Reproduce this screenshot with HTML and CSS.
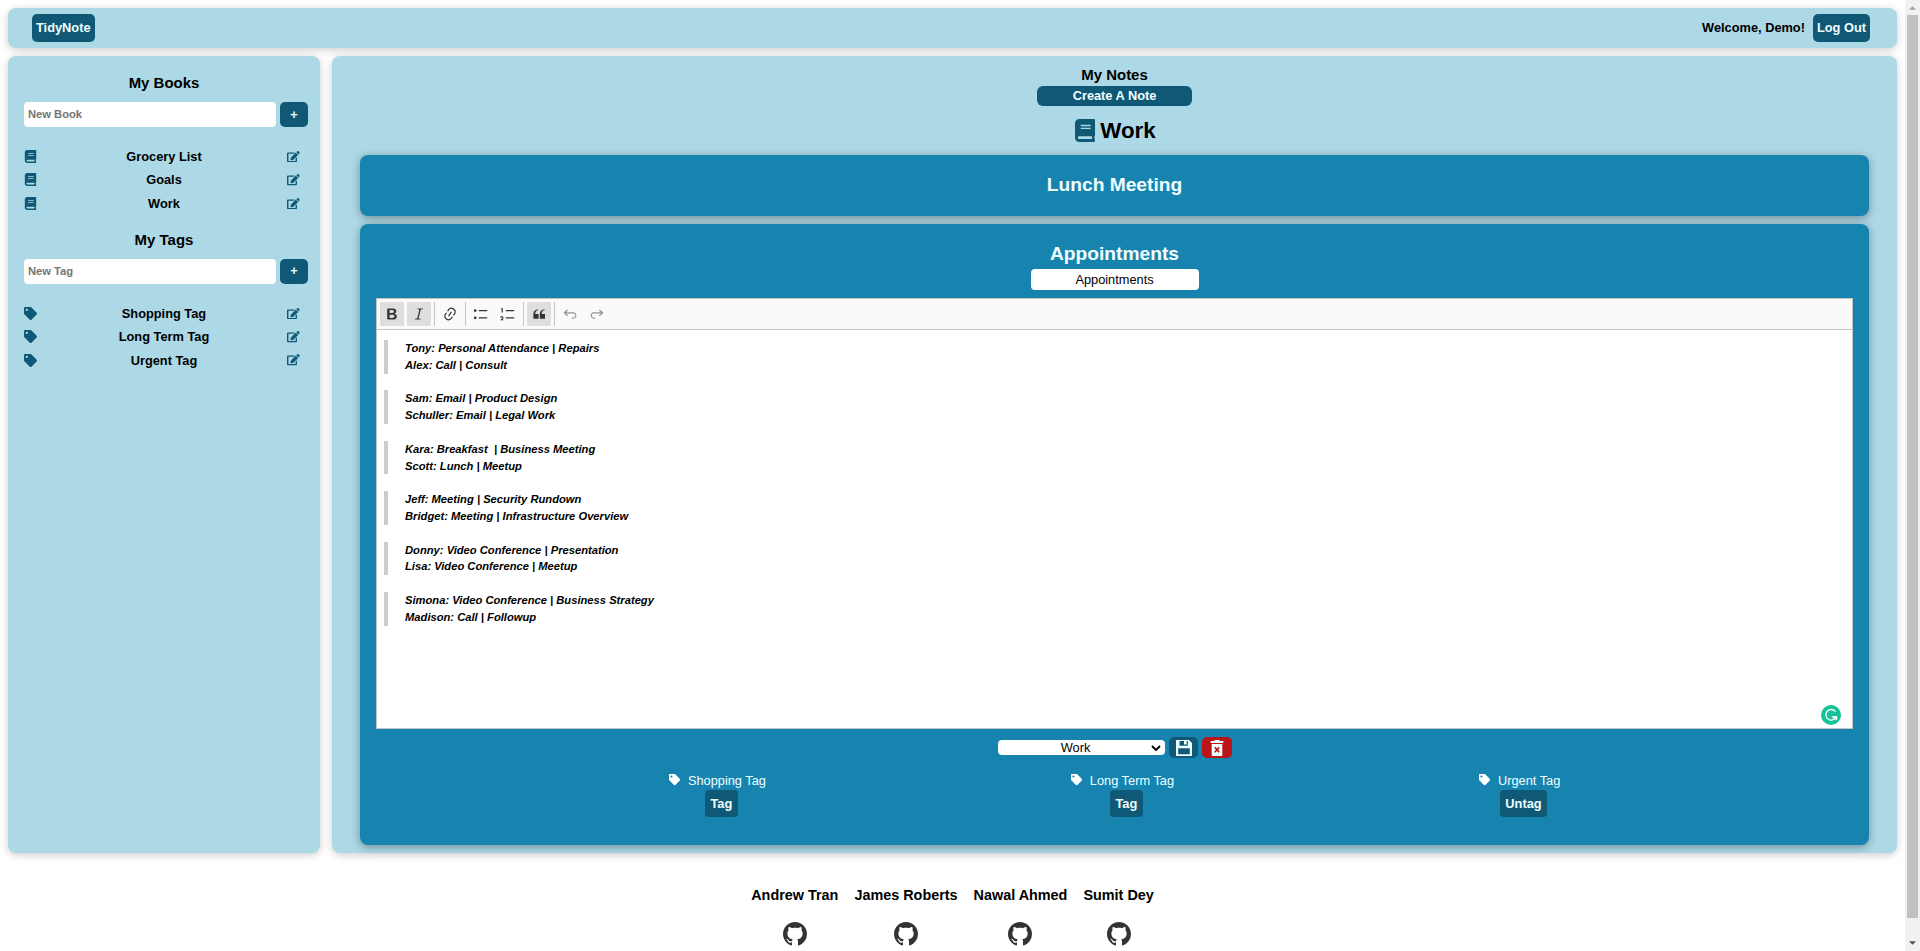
FILE: index.html
```html
<!DOCTYPE html>
<html lang="en">
<head>
<meta charset="utf-8">
<title>TidyNote</title>
<link rel="stylesheet" href="styles.css">
</head>
<body>
<svg class="defs" width="0" height="0" aria-hidden="true">
  <symbol id="book" viewBox="0 0 448 512"><path d="M448 360V24c0-13.300-10.700-24-24-24H96C43 0 0 43 0 96v320c0 53 43 96 96 96h328c13.300 0 24-10.700 24-24v-16c0-7.500-3.500-14.300-8.900-18.700-4.200-15.400-4.200-59.300 0-74.700 5.400-4.300 8.900-11.100 8.900-18.600zM128 134c0-3.300 2.700-6 6-6h212c3.300 0 6 2.700 6 6v20c0 3.300-2.700 6-6 6H134c-3.300 0-6-2.700-6-6v-20zm0 64c0-3.300 2.700-6 6-6h212c3.300 0 6 2.700 6 6v20c0 3.300-2.700 6-6 6H134c-3.300 0-6-2.700-6-6v-20zm253.400 250H96c-17.700 0-32-14.300-32-32 0-17.600 14.400-32 32-32h285.400c-1.900 17.100-1.900 46.900 0 64z"/></symbol>
  <symbol id="tag" viewBox="0 0 512 512"><path d="M0 252.118V48C0 21.490 21.490 0 48 0h204.118a48 48 0 0 1 33.941 14.059l211.882 211.882c18.745 18.745 18.745 49.137 0 67.882L293.823 497.941c-18.745 18.745-49.137 18.745-67.882 0L14.059 286.059A48 48 0 0 1 0 252.118zM112 64c-26.510 0-48 21.490-48 48s21.490 48 48 48 48-21.490 48-48-21.490-48-48-48z"/></symbol>
  <symbol id="edit" viewBox="0 0 576 512"><path d="M402.600 83.200l90.200 90.200c3.800 3.800 3.800 10 0 13.800L274.400 405.600l-92.800 10.300c-12.400 1.400-22.900-9.100-21.500-21.500l10.300-92.800L388.800 83.200c3.800-3.800 10-3.800 13.800 0zm162-22.900l-48.800-48.800c-15.200-15.200-39.900-15.200-55.200 0l-35.400 35.400c-3.800 3.800-3.800 10 0 13.800l90.200 90.200c3.800 3.800 10 3.800 13.800 0l35.400-35.400c15.200-15.300 15.200-40 0-55.200zM384 346.200V448H64V128h229.800c3.200 0 6.200-1.300 8.500-3.500l40-40c7.600-7.600 2.200-20.500-8.500-20.500H48C21.500 64 0 85.500 0 112v352c0 26.500 21.500 48 48 48h352c26.500 0 48-21.500 48-48V306.200c0-10.700-12.900-16-20.500-8.500l-40 40c-2.200 2.300-3.500 5.300-3.500 8.500z"/></symbol>
  <symbol id="github" viewBox="0 0 16 16"><path d="M8 0C3.580 0 0 3.580 0 8c0 3.540 2.290 6.530 5.470 7.590.4.070.55-.17.55-.38 0-.19-.01-.82-.01-1.490-2.010.37-2.530-.49-2.690-.94-.09-.23-.48-.94-.82-1.130-.28-.15-.68-.52-.01-.53.63-.01 1.080.58 1.230.82.720 1.210 1.870.87 2.330.66.070-.52.280-.87.510-1.070-1.780-.2-3.640-.89-3.640-3.950 0-.87.310-1.590.82-2.150-.08-.2-.36-1.020.08-2.120 0 0 .67-.21 2.200.82.640-.18 1.320-.27 2-.27s1.360.09 2 .27c1.530-1.040 2.200-.82 2.200-.82.440 1.100.160 1.920.080 2.120.510.560.820 1.270.820 2.150 0 3.070-1.870 3.750-3.650 3.950.290.250.540.730.540 1.480 0 1.070-.01 1.930-.01 2.200 0 .21.150.46.550.38A8.010 8.010 0 0 0 16 8c0-4.420-3.580-8-8-8z"/></symbol>
</svg>
<div class="window">
  <div class="page">
    <header class="navbar">
      <button class="btn">TidyNote</button>
      <div class="session"><span>Welcome, Demo!</span><button class="btn">Log Out</button></div>
    </header>
    <div class="columns">
      <aside class="sidebar">
        <h3>My Books</h3>
        <form class="adder"><input type="text" placeholder="New Book"><button type="button" class="plus">+</button></form>
        <ul>
          <li><svg class="mark"><use href="#book"/></svg><span>Grocery List</span><svg class="pen"><use href="#edit"/></svg></li>
          <li><svg class="mark"><use href="#book"/></svg><span>Goals</span><svg class="pen"><use href="#edit"/></svg></li>
          <li><svg class="mark"><use href="#book"/></svg><span>Work</span><svg class="pen"><use href="#edit"/></svg></li>
        </ul>
        <h3>My Tags</h3>
        <form class="adder"><input type="text" placeholder="New Tag"><button type="button" class="plus">+</button></form>
        <ul>
          <li><svg class="mark"><use href="#tag"/></svg><span>Shopping Tag</span><svg class="pen"><use href="#edit"/></svg></li>
          <li><svg class="mark"><use href="#tag"/></svg><span>Long Term Tag</span><svg class="pen"><use href="#edit"/></svg></li>
          <li><svg class="mark"><use href="#tag"/></svg><span>Urgent Tag</span><svg class="pen"><use href="#edit"/></svg></li>
        </ul>
      </aside>
      <main class="notes">
        <h3>My Notes</h3>
        <button class="create">Create A Note</button>
        <h1><svg><use href="#book"/></svg>Work</h1>
        <section class="note closed"><h2>Lunch Meeting</h2></section>
        <section class="note open">
          <h2>Appointments</h2>
          <input class="title" type="text" value="Appointments">
          <div class="editor">
            <div class="toolbar">
              <button class="tool on"><svg viewBox="0 0 20 20"><path d="M10.187 17H5.773c-.637 0-1.092-.138-1.364-.415-.273-.277-.409-.718-.409-1.323V4.738c0-.617.140-1.062.419-1.332.279-.27.730-.406 1.354-.406h4.680c.690 0 1.288.041 1.793.124.506.083.960.242 1.360.478.341.197.644.447.906.750a3.262 3.262 0 0 1 .808 2.162c0 1.401-.722 2.426-2.167 3.075C15.050 10.175 16 11.315 16 13.010a3.756 3.756 0 0 1-2.296 3.504 6.100 6.100 0 0 1-1.517.377c-.571.073-1.238.110-2 .110zm-.217-6.217H7v4.087h3.069c1.977 0 2.965-.69 2.965-2.072 0-.707-.256-1.220-.768-1.537-.512-.319-1.277-.478-2.296-.478zM7 5.130v3.619h2.606c.729 0 1.292-.067 1.690-.2a1.600 1.600 0 0 0 .91-.765c.165-.267.247-.566.247-.897 0-.707-.26-1.176-.778-1.409-.519-.232-1.310-.348-2.375-.348H7z"/></svg></button>
              <button class="tool on"><svg viewBox="0 0 20 20"><path d="M9.586 14.633l.021.004c-.036.335.095.655.393.962.082.083.173.150.274.201h1.474a.6.6 0 1 1 0 1.200H5.304a.6.6 0 0 1 0-1.200h1.150c.474-.07.809-.182 1.005-.334.157-.122.291-.32.404-.597l2.416-9.550a1.053 1.053 0 0 0-.281-.823 1.120 1.120 0 0 0-.442-.296H8.150a.6.6 0 0 1 0-1.200h6.443a.6.6 0 1 1 0 1.200h-1.195c-.376.056-.65.155-.823.296-.215.175-.423.439-.623.790l-2.366 9.347z"/></svg></button>
              <i class="bar"></i>
              <button class="tool"><svg viewBox="0 0 20 20"><path d="m11.077 15 .991-1.416a.75.75 0 1 1 1.229.860l-1.148 1.640a.748.748 0 0 1-.217.206 5.251 5.251 0 0 1-8.503-5.955.741.741 0 0 1 .120-.274l1.147-1.639a.75.75 0 1 1 1.228.860L4.933 10.700l.006.003a3.750 3.750 0 0 0 6.132 4.294l.006.004zm5.494-5.335a.748.748 0 0 1-.120.274l-1.147 1.639a.75.75 0 1 1-1.228-.860l.860-1.230a3.750 3.750 0 0 0-6.144-4.301l-.860 1.229a.75.75 0 0 1-1.229-.860l1.148-1.640a.748.748 0 0 1 .217-.206 5.251 5.251 0 0 1 8.503 5.955zm-4.563-2.532a.75.75 0 0 1 .184 1.045l-3.155 4.505a.75.75 0 1 1-1.229-.860l3.155-4.506a.75.75 0 0 1 1.045-.184z"/></svg></button>
              <i class="bar"></i>
              <button class="tool"><svg viewBox="0 0 20 20"><path d="M7 5.750c0 .414.336.750.750.750h9.500a.75.75 0 1 0 0-1.500h-9.500a.75.75 0 0 0-.750.750zm-6 0C1 4.784 1.777 4 2.750 4c.966 0 1.750.777 1.750 1.750 0 .966-.777 1.750-1.750 1.750C1.784 7.500 1 6.723 1 5.750zm6 9c0 .414.336.750.750.750h9.500a.75.75 0 1 0 0-1.500h-9.500a.75.75 0 0 0-.750.750zm-6 0c0-.966.777-1.750 1.750-1.750.966 0 1.750.777 1.750 1.750 0 .966-.777 1.750-1.750 1.750-.966 0-1.750-.777-1.750-1.750z"/></svg></button>
              <button class="tool"><svg viewBox="0 0 20 20"><path d="M7 5.750c0 .414.336.750.750.750h9.500a.75.75 0 1 0 0-1.500h-9.500a.75.75 0 0 0-.750.750zM3.500 3v5H2V3.700H1v-1h2.500V3zM.343 17.857l2.590-3.257H2.920a.6.6 0 1 0-1.040 0H.302a2 2 0 1 1 3.995 0h-.001c-.048.405-.16.734-.333.988-.175.254-.590.692-1.244 1.312H4.300v1h-4l.043-.043zM7 14.750a.75.75 0 0 1 .750-.750h9.500a.75.75 0 1 1 0 1.500h-9.500a.75.75 0 0 1-.750-.750z"/></svg></button>
              <i class="bar"></i>
              <button class="tool on"><svg viewBox="0 0 20 20"><path d="M3 10.423a6.500 6.500 0 0 1 6.056-6.408l.038.670C6.448 5.423 5.354 7.663 5.220 10H9c.552 0 .500.432.500.986v4.511c0 .554-.448.503-1 .503h-5c-.552 0-.500-.449-.500-1.003v-4.574zm8 0a6.500 6.500 0 0 1 6.056-6.408l.038.670c-2.646.739-3.740 2.979-3.873 5.315H17c.552 0 .500.432.500.986v4.511c0 .554-.448.503-1 .503h-5c-.552 0-.500-.449-.500-1.003v-4.574z"/></svg></button>
              <i class="bar"></i>
              <button class="tool off"><svg viewBox="0 0 20 20"><path d="M5.042 9.367l2.189 1.837a.75.75 0 0 1-.965 1.149l-3.788-3.180a.747.747 0 0 1-.210-.284.75.75 0 0 1 .170-.945L6.230 4.762a.75.75 0 1 1 .964 1.150L4.863 7.866h8.917A.75.75 0 0 1 14 7.900a4 4 0 1 1-1.477 7.718l.344-1.489a2.500 2.500 0 1 0 1.094-4.730l.008-.032H5.042z"/></svg></button>
              <button class="tool off"><svg viewBox="0 0 20 20"><path d="M14.958 9.367l-2.189 1.837a.75.75 0 0 0 .965 1.149l3.788-3.180a.747.747 0 0 0 .210-.284.75.75 0 0 0-.170-.945L13.770 4.762a.75.75 0 1 0-.964 1.150l2.331 1.955H6.220A.75.75 0 0 0 6 7.900a4 4 0 1 0 1.477 7.718l-.344-1.489A2.500 2.500 0 1 1 6.039 9.400l-.008-.032h8.927z"/></svg></button>
            </div>
            <div class="content">
              <blockquote>Tony: Personal Attendance | Repairs<br>Alex: Call | Consult</blockquote>
              <blockquote>Sam: Email | Product Design<br>Schuller: Email | Legal Work</blockquote>
              <blockquote>Kara: Breakfast&nbsp; | Business Meeting<br>Scott: Lunch | Meetup</blockquote>
              <blockquote>Jeff: Meeting | Security Rundown<br>Bridget: Meeting | Infrastructure Overview</blockquote>
              <blockquote>Donny: Video Conference | Presentation<br>Lisa: Video Conference | Meetup</blockquote>
              <blockquote>Simona: Video Conference | Business Strategy<br>Madison: Call | Followup</blockquote>
              <svg class="checker" viewBox="0 0 20 20"><circle cx="10" cy="10" r="10" fill="#15c39a"/><path d="M14.500 6.700A5.300 5.300 0 1 0 15 12H10.900" fill="none" stroke="#fff" stroke-width="1.300"/><path d="M12.300 11.200H16.200V15.400L14.900 14.200L13.600 15z" fill="#fff"/></svg>
            </div>
          </div>
          <div class="actions">
            <div class="select"><span>Work</span><svg viewBox="0 0 10 6"><path d="M1 1l4 4 4-4" fill="none" stroke="#000" stroke-width="1.900"/></svg></div>
            <button class="icon save"><svg viewBox="0 0 16 16"><path fill-rule="evenodd" d="M.5 0H13L16 3V15.500a.5.500 0 0 1-.5.500H.5a.5.500 0 0 1-.5-.5V.5A.5.500 0 0 1 .5 0zM3.500 1v4.800H11.800V1H10.600V4.600H8V1zM2.200 8.300v6h11.600v-6z"/></svg></button>
            <button class="icon trash"><svg viewBox="0 0 14 16"><path fill-rule="evenodd" d="M4.500 1V0h5v1H13.300V3H.7V1zM1.700 4H12.300V15a1 1 0 0 1-1 1H2.700a1 1 0 0 1-1-1zM4.200 7.900L5.900 9.800 4.200 11.700l1.100 1.100L7 11l1.700 1.800 1.100-1.100L8.100 9.800l1.700-1.900-1.100-1.100L7 8.600 5.300 6.800z"/></svg></button>
          </div>
          <div class="tags">
            <div class="tagitem"><p><svg><use href="#tag"/></svg>Shopping Tag</p><button>Tag</button></div>
            <div class="tagitem"><p><svg><use href="#tag"/></svg>Long Term Tag</p><button>Tag</button></div>
            <div class="tagitem"><p><svg><use href="#tag"/></svg>Urgent Tag</p><button>Untag</button></div>
          </div>
        </section>
      </main>
    </div>
    <footer>
      <div><h3>Andrew Tran</h3><svg><use href="#github"/></svg></div>
      <div><h3>James Roberts</h3><svg><use href="#github"/></svg></div>
      <div><h3>Nawal Ahmed</h3><svg><use href="#github"/></svg></div>
      <div><h3>Sumit Dey</h3><svg><use href="#github"/></svg></div>
    </footer>
  </div>
  <div class="scrollbar">
    <svg class="up" viewBox="0 0 8 4"><path d="M0 4L4 0l4 4z"/></svg>
    <div class="thumb"></div>
    <svg class="down" viewBox="0 0 8 4"><path d="M0 0l4 4 4-4z"/></svg>
  </div>
</div>
</body>
</html>
```
FILE: styles.css
```css
* { box-sizing: border-box; }
body { margin: 0; overflow: hidden; background: #fff; color: #000; font: 12.8px/15px "Liberation Sans", Arial, sans-serif; }
.defs { display: none; }
button, input { font: inherit; border: 0; margin: 0; }
h1, h2, h3, p, ul { margin: 0; padding: 0; }
svg { display: block; flex: none; fill: currentColor; }
.window { display: flex; width: 1920px; height: 951px; }
.page { width: 1905px; height: 951px; padding: 8px; overflow: hidden; }

.navbar, .sidebar, .notes { background: #add8e6; border-radius: 8px; box-shadow: 0 2px 8px rgba(0, 0, 0, .2); }
.navbar { height: 40px; margin-bottom: 8px; padding: 0 27px 0 24px; display: flex; justify-content: space-between; align-items: center; font-weight: bold; }
.session { display: flex; align-items: center; gap: 8px; }
.session span { padding-bottom: 1px; }
.btn { height: 28px; padding: 0 4px 1px; border-radius: 5px; background: #105976; color: azure; }

.columns { display: flex; gap: 12px; height: 797px; }
.sidebar { width: 312px; padding: 18px 12px 0 16px; font-weight: bold; }
.sidebar h3 { font-size: 14.980px; line-height: 18px; text-align: center; padding: 0 4px 10px 0; }
.adder { display: flex; gap: 4px; height: 25px; }
.adder input { width: 252px; padding: 0 4px; border-radius: 4px; font-size: 11.200px; background: #fff; }
.adder input::placeholder { color: #757575; }
.plus { width: 28px; padding: 0 0 1px; border-radius: 5px; background: #105976; color: azure; }
.sidebar ul { list-style: none; margin: 18px 4px 16px 0; }
.sidebar li { height: 23.300px; display: grid; grid-template-columns: 20px 1fr 20px; align-items: center; text-align: center; padding-right: 4px; }
.sidebar li span { padding-left: 4px; }
.mark { width: 13px; height: 13px; color: #105976; }
.pen { width: 12.800px; height: 11.400px; justify-self: end; color: #105976; }

.notes { width: 1565px; padding: 10px 28px 0; display: flex; flex-direction: column; align-items: center; }
.notes h3 { font-size: 14.980px; line-height: 18px; }
.create { width: 155px; height: 20px; margin-top: 2px; border-radius: 6px; background: #105976; color: azure; font-weight: bold; padding: 0 0 1px; }
.notes h1 { display: flex; align-items: center; gap: 5px; height: 49px; padding-left: 2px; font-size: 22.400px; line-height: 26px; }
.notes h1 svg { width: 20px; height: 23px; color: #105976; }
.note { width: 1509px; border-radius: 8px; background: #1784b0; color: azure; box-shadow: 0 2px 8px rgba(0, 0, 0, .35); }
.note h2 { font-size: 19.200px; line-height: 22px; text-align: center; }
.closed { height: 61px; padding-top: 19px; }
.open { height: 621px; margin-top: 8px; padding: 19px 16px 0; display: flex; flex-direction: column; align-items: center; }
.title { width: 168px; height: 21px; margin: 4px 0 8px; padding: 0 4px; border-radius: 4px; background: #fff; color: #000; text-align: center; }

.editor { width: 1477px; height: 431px; border: 1px solid #c4c4c4; background: #fff; color: #000; }
.toolbar { height: 31px; padding: 0 3px; display: flex; align-items: center; background: #fafafa; border-bottom: 1px solid #c4c4c4; }
.tool { width: 24px; height: 24px; margin-right: 3px; padding: 0; display: flex; align-items: center; justify-content: center; border-radius: 1px; background: transparent; color: #333; }
.tool svg { width: 16px; height: 16px; }
.tool.on { background: #dedede; }
.tool.off { opacity: .5; }
.bar { width: 1px; height: 24px; margin-right: 3px; background: #c4c4c4; }
.content { position: relative; padding: 10px 7px 0; font: italic bold 11.200px/16.800px "Liberation Sans", Arial, sans-serif; }
blockquote { margin: 0 0 16.800px; padding-left: 17px; border-left: 4px solid #ccc; }
.checker { position: absolute; right: 11px; top: 375px; width: 20px; height: 20px; }

.actions { display: flex; align-items: center; gap: 4px; margin: 8px 0 0 1px; }
.select { width: 167px; height: 15px; padding: 0 4px 0 2px; display: flex; align-items: center; border-radius: 4px; background: #fff; color: #000; }
.select span { flex: 1; text-align: center; }
.select svg { width: 10px; height: 6px; }
.icon { height: 21px; padding: 0; display: flex; align-items: center; justify-content: center; border-radius: 5px; color: azure; }
.save { width: 29px; background: #105976; }
.save svg { width: 16px; height: 16px; }
.trash { width: 30px; background: #bb1519; }
.trash svg { width: 14px; height: 16px; }
.tags { align-self: stretch; display: flex; justify-content: space-evenly; margin: 14px -8px 0 0; }
.tagitem { display: flex; flex-direction: column; align-items: center; }
.tagitem p { display: flex; align-items: center; padding: 0 12px 0 4px; height: 16px; }
.tagitem svg { width: 11.200px; height: 11.200px; margin-right: 8px; color: #fff; }
.tagitem button { height: 27px; margin-top: 2px; padding: 0 5.500px; border-radius: 4px; background: #105976; color: azure; font-weight: bold; }

footer { display: flex; justify-content: center; gap: 16px; padding-top: 33px; }
footer div { display: flex; flex-direction: column; align-items: center; }
footer h3 { font-size: 14.400px; line-height: 18px; }
footer svg { width: 24px; height: 24px; margin-top: 18px; color: #333; }

.scrollbar { width: 15px; height: 951px; display: flex; flex-direction: column; align-items: center; background: #f1f1f1; }
.scrollbar svg { width: 7px; height: 4px; }
.up { margin: 6px 0 5px; color: #a0a0a0; }
.thumb { width: 11px; height: 903px; background: #c1c1c1; }
.down { margin-top: 23px; color: #505050; }
```
